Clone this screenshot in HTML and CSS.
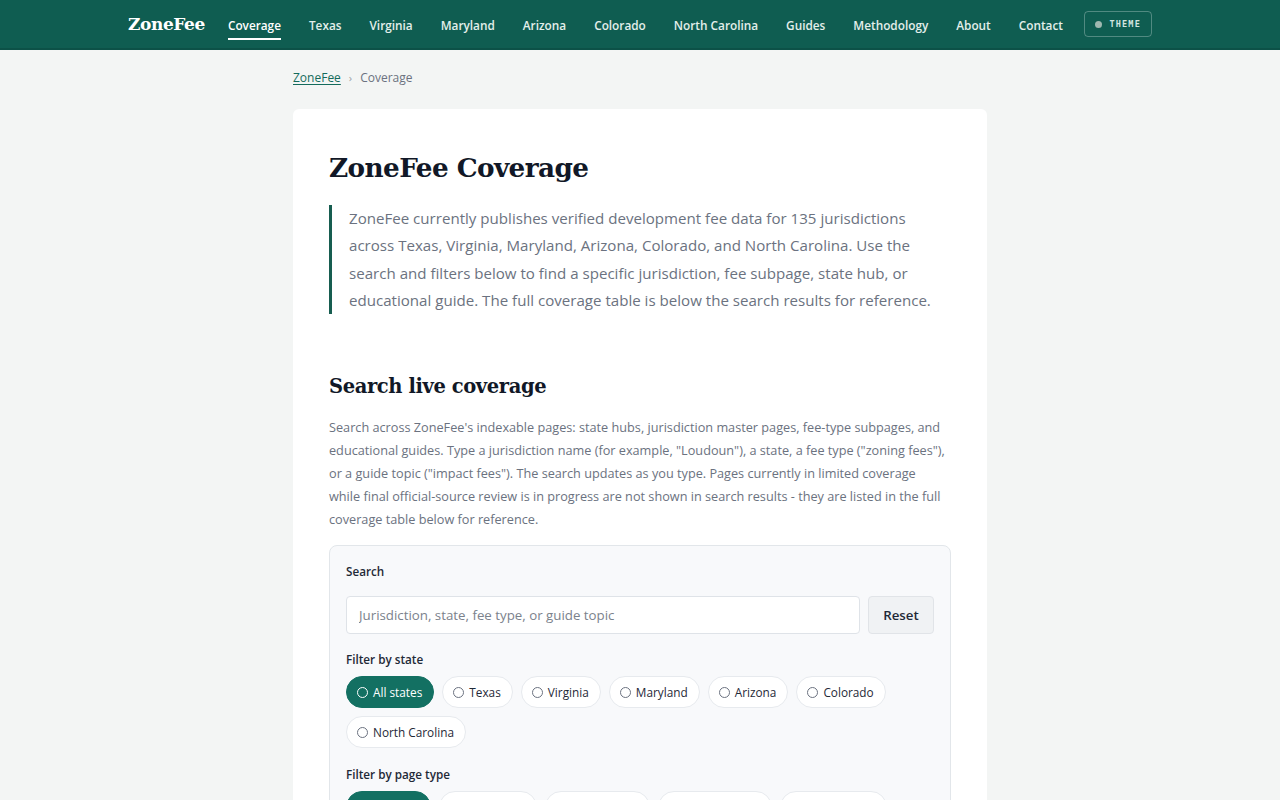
FILE: index.html
```html
<!DOCTYPE html>
<html lang="en">
<head>
<meta charset="utf-8">
<title>ZoneFee Coverage</title>
<link rel="stylesheet" href="styles.css">
</head>
<body>
<header class="site-header">
  <div class="header-inner">
    <a class="logo" href="#">ZoneFee</a>
    <nav class="nav">
      <a class="nav-link active" href="#">Coverage</a>
      <a class="nav-link" href="#">Texas</a>
      <a class="nav-link" href="#">Virginia</a>
      <a class="nav-link" href="#">Maryland</a>
      <a class="nav-link" href="#">Arizona</a>
      <a class="nav-link" href="#">Colorado</a>
      <a class="nav-link" href="#">North Carolina</a>
      <a class="nav-link" href="#">Guides</a>
      <a class="nav-link" href="#">Methodology</a>
      <a class="nav-link" href="#">About</a>
      <a class="nav-link" href="#">Contact</a>
    </nav>
    <button class="theme-btn" type="button"><span class="theme-dot"></span>THEME</button>
  </div>
</header>
<main class="main">
  <div class="breadcrumb">
    <a href="#" class="crumb-link">ZoneFee</a>
    <span class="crumb-sep">›</span>
    <span class="crumb-current">Coverage</span>
  </div>
  <article class="card">
    <h1 class="title">ZoneFee Coverage</h1>
    <blockquote class="lead">ZoneFee currently publishes verified development fee data for 135 jurisdictions across Texas, Virginia, Maryland, Arizona, Colorado, and North Carolina. Use the search and filters below to find a specific jurisdiction, fee subpage, state hub, or educational guide. The full coverage table is below the search results for reference.</blockquote>

    <h2 class="section-title">Search live coverage</h2>
    <p class="section-text">Search across ZoneFee's indexable pages: state hubs, jurisdiction master pages, fee-type subpages, and educational guides. Type a jurisdiction name (for example, "Loudoun"), a state, a fee type ("zoning fees"), or a guide topic ("impact fees"). The search updates as you type. Pages currently in limited coverage while final official-source review is in progress are not shown in search results - they are listed in the full coverage table below for reference.</p>

    <div class="search-panel">
      <label class="field-label">Search</label>
      <div class="search-row">
        <input class="search-input" type="text" placeholder="Jurisdiction, state, fee type, or guide topic">
        <button class="reset-btn" type="button">Reset</button>
      </div>
      <div class="field-label">Filter by state</div>
      <div class="chips">
        <span class="chip active"><span class="radio"></span>All states</span>
        <span class="chip"><span class="radio"></span>Texas</span>
        <span class="chip"><span class="radio"></span>Virginia</span>
        <span class="chip"><span class="radio"></span>Maryland</span>
        <span class="chip"><span class="radio"></span>Arizona</span>
        <span class="chip"><span class="radio"></span>Colorado</span>
        <span class="chip"><span class="radio"></span>North Carolina</span>
      </div>
      <div class="field-label">Filter by page type</div>
      <div class="chips">
        <span class="chip active"><span class="radio"></span>All types</span>
        <span class="chip"><span class="radio"></span>State hubs</span>
        <span class="chip"><span class="radio"></span>Jurisdictions</span>
        <span class="chip"><span class="radio"></span>Fee subpages</span>
        <span class="chip"><span class="radio"></span>Guide pages</span>
      </div>
    </div>
  </article>
</main>
</body>
</html>
```
FILE: styles.css
```css
* { box-sizing: border-box; }
html, body { margin: 0; padding: 0; }
body {
  background: #f3f5f4;
  font-family: "Open Sans", "Noto Sans", sans-serif;
  color: #1f2937;
}
a { text-decoration: none; color: inherit; }

.site-header {
  background: #0f5d51;
  height: 50px;
  border-bottom: 2px solid #0c5147;
}
.header-inner {
  width: 1024px;
  margin: 0 auto;
  height: 48px;
  display: flex;
  align-items: center;
}
.logo {
  font-family: "DejaVu Serif", serif;
  font-weight: 700;
  font-size: 17px;
  color: #ffffff;
  letter-spacing: -0.4px;
  margin-right: 23px;
  white-space: nowrap;
}
.nav {
  display: flex;
  align-items: center;
  gap: 28px;
  flex: 1;
}
.nav-link {
  font-size: 11.8px;
  font-weight: 600;
  color: #e3efeb;
  padding: 6px 0 5px;
  border-bottom: 2px solid transparent;
  margin-top: 3px;
  white-space: nowrap;
}
.nav-link.active {
  color: #ffffff;
  border-bottom-color: #ffffff;
}
.theme-btn {
  display: flex;
  align-items: center;
  gap: 7px;
  height: 26px;
  padding: 0 10px;
  margin-left: auto;
  background: transparent;
  border: 1px solid rgba(255,255,255,0.28);
  border-radius: 4px;
  color: #d4e6e0;
  font-family: "DejaVu Sans Mono", monospace;
  font-size: 8.5px;
  letter-spacing: 1.2px;
  font-weight: 700;
  white-space: nowrap;
}
.theme-dot {
  width: 7px;
  height: 7px;
  border-radius: 50%;
  background: #9fb8b0;
}

.main {
  width: 694px;
  margin: 0 auto;
  padding-top: 20px;
}
.breadcrumb {
  font-size: 12px;
  color: #6b7280;
  display: flex;
  gap: 8px;
  align-items: center;
  height: 15px;
}
.crumb-link {
  color: #146b5c;
  text-decoration: underline;
  text-underline-offset: 2px;
}
.crumb-sep { font-size: 11px; color: #9aa0a6; }

.card {
  margin-top: 24px;
  background: #ffffff;
  border-radius: 6px;
  padding: 40px 36px 40px;
}
.title {
  font-family: "DejaVu Serif", serif;
  font-weight: 700;
  font-size: 26.3px;
  letter-spacing: -0.6px;
  color: #111827;
  margin: 0;
  line-height: 38px;
}
.lead {
  margin: 18px 0 0;
  border-left: 3px solid #175d50;
  padding: 0 0 0 17px;
  font-size: 15.1px;
  line-height: 27.3px;
  color: #6b7280;
}
.section-title {
  font-family: "DejaVu Serif", serif;
  font-weight: 700;
  font-size: 19.5px;
  letter-spacing: -0.4px;
  color: #111827;
  margin: 57px 0 0;
  line-height: 32px;
}
.section-text {
  margin: 13px 0 0;
  max-width: 618px;
  font-size: 12.7px;
  line-height: 23px;
  color: #6b7280;
}
.search-panel {
  margin-top: 14px;
  background: #f8f9fb;
  border: 1px solid #e2e6ea;
  border-radius: 8px;
  padding: 16px 16px 20px;
}
.field-label {
  display: block;
  font-size: 11.7px;
  font-weight: 600;
  color: #1f2937;
  line-height: 18px;
}
.search-row {
  display: flex;
  gap: 8px;
  margin: 16px 0 16px;
}
.search-input {
  flex: 1;
  height: 38px;
  border: 1px solid #dfe3e8;
  border-radius: 4px;
  background: #ffffff;
  padding: 0 12px;
  font-family: "Open Sans", "Noto Sans", sans-serif;
  font-size: 13.3px;
  color: #1f2937;
}
.search-input::placeholder { color: #7b828c; }
.reset-btn {
  width: 66px;
  height: 38px;
  border: 1px solid #e1e4e8;
  border-radius: 4px;
  background: #f0f2f4;
  font-family: "Open Sans", "Noto Sans", sans-serif;
  font-size: 13.3px;
  font-weight: 600;
  color: #1f2937;
}
.chips {
  display: flex;
  flex-wrap: wrap;
  gap: 8px;
  margin: 8px 0 17px;
}
.chip {
  display: inline-flex;
  align-items: center;
  gap: 5px;
  height: 32px;
  padding: 0 11px 0 10px;
  border: 1px solid #e7eaee;
  border-radius: 16px;
  background: #ffffff;
  font-size: 11.8px;
  color: #1f2937;
  white-space: nowrap;
}
.chip.active {
  background: #137062;
  border-color: #137062;
  color: #ffffff;
}
.radio {
  width: 11px;
  height: 11px;
  border-radius: 50%;
  border: 1px solid #6b7280;
  background: #ffffff;
}
.chip.active .radio {
  border: 1.5px solid #ffffff;
  background: transparent;
}
```
